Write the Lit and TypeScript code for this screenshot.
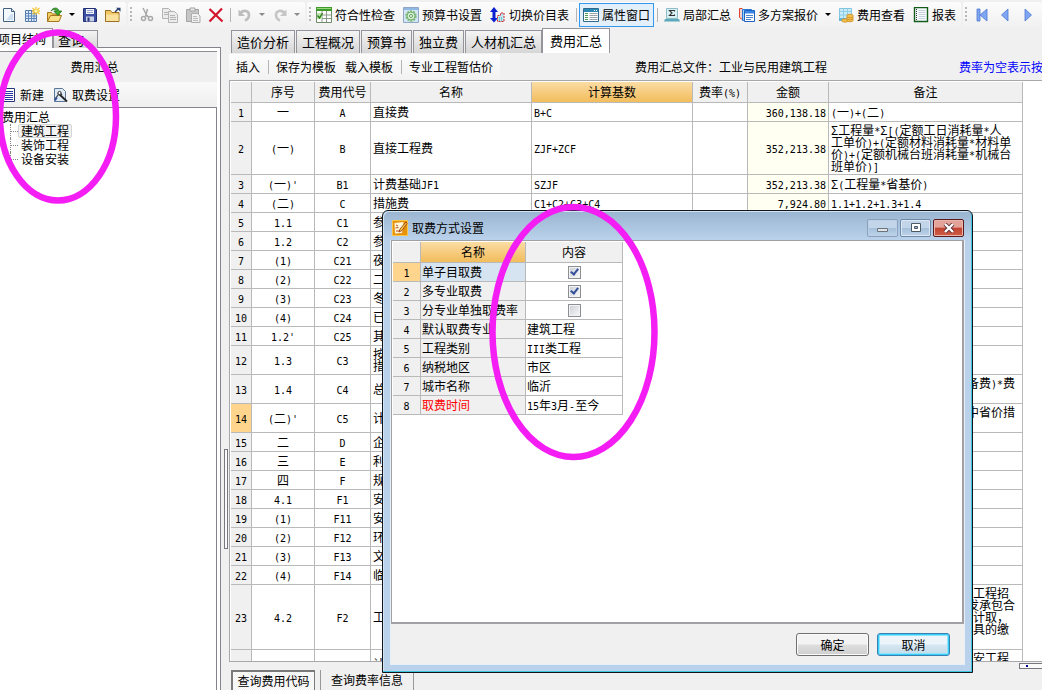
import { LitElement, html, css, svg, nothing, TemplateResult } from "lit";
import { customElement, property, state } from "lit/decorators.js";
import { classMap } from "lit/directives/class-map.js";

const base = css`
  :host {
    font-family: "Noto Sans CJK SC", sans-serif;
    font-size: 12px;
    line-height: 12px;
    color: #000;
  }
  *, *::before, *::after { box-sizing: border-box; }
  button {
    font: inherit;
    color: inherit;
    border: 0;
    background: none;
    padding: 0;
    margin: 0;
    white-space: nowrap;
  }
  .mono { font-family: "DejaVu Sans Mono", monospace; font-size: 10px; line-height: 0; white-space: pre; }
  table { border-collapse: separate; border-spacing: 0; table-layout: fixed; }
  th, td {
    padding: 0 2px;
    font-weight: normal;
    border-right: 1px solid #b9b9b9;
    border-bottom: 1px solid #b9b9b9;
    overflow: hidden;
    white-space: nowrap;
    height: 19px;
  }
  th { background: #f0f0f0; text-align: center; }
  thead th { height: 21px; }
  th.hot { background: linear-gradient(#fbdca4, #f2bd5c); }
  th.cur { background: #ffd58d; }
  td { background: #fff; text-align: left; }
`;

/** Sets Latin runs in the half-width face so that two of them fill one ideograph. */
const mix = (s: string) =>
  s.split(/([\x20-\x7e\u00a0]+)/).filter(Boolean).map((p) =>
    /^[\x20-\x7e\u00a0]+$/.test(p) ? html`<span class="mono">${p}</span>` : p);

const lines = (s: string) => s.split("\n").map((l, i) => html`${i ? html`<br />` : nothing}${mix(l)}`);

const icon = (body: TemplateResult) =>
  html`<svg width="16" height="16" viewBox="0 0 16 16" aria-hidden="true">${body}</svg>`;

const icons: Record<string, TemplateResult> = {
  new: svg`<path d="M2.500 1.500h8l3 3v10h-11z" fill="#f3f8fd" stroke="#43617f"/><path d="M10.500 1.500v3h3" fill="#cfe0f0" stroke="#43617f"/><path d="M10 7h2v6h-7z" fill="#cddff0"/>`,
  sheet: svg`<path d="M1.500 3.500h11v11h-11z" fill="#dbe9f7" stroke="#5579a8"/><path d="M1.500 6.500h11M1.500 9h11M1.500 11.500h11M4.500 3.500v11M7.500 3.500v11M10 3.500v11" stroke="#5f86ba"/><path d="M12 0v8M8.500 1l7 6M15.500 1l-7 6M8 4h8" stroke="#f5c83c" stroke-width="1.300"/><circle cx="12" cy="4" r="1.600" fill="#fff6b0"/>`,
  open: svg`<path d="M.5 14.500v-9h4l1 1.500h7v2" fill="#f4cd62" stroke="#a8761c"/><path d="M.5 14.500l3-6h11l-2.500 6z" fill="#fbe08a" stroke="#a8761c"/><path d="M4 4c2-4 7-4 8 0h2.800l-4 4.500-4-4.500h2.500c-1-2-3-2-5.300 0z" fill="#3da62f" stroke="#1d6a18" stroke-width=".7"/>`,
  save: svg`<path d="M1.500 1.500h12l1 1v12h-13z" fill="#3d4fa3" stroke="#232f74"/><path d="M4 2h8v5h-8z" fill="#f1f4fb"/><path d="M5 3.500h6M5 5.500h6" stroke="#9aa7cf"/><path d="M4 9.500h8v5h-8z" fill="#c8d0e6"/><path d="M5.500 10.500h2v4h-2z" fill="#27337b"/>`,
  folder: svg`<path d="M.5 14.500v-11h5l1.500 2h7v9z" fill="#f2c765" stroke="#9a7023"/><path d="M1 7.500h12.500v6.500h-12.500z" fill="#fae29c"/><path d="M10 5l3.500-3.500" stroke="#27406e" stroke-width="1.400"/><path d="M11 .8h4.500v4z" fill="#27406e"/>`,
  cut: svg`<g fill="none" stroke="#a9a9a9" stroke-width="1.500"><path d="M4 1l4.500 9M8.500 2l-2 7.500"/><circle cx="4.500" cy="11.500" r="2"/><circle cx="11.500" cy="11.500" r="2"/><path d="M7 8l3 2"/></g>`,
  copy: svg`<g fill="#ececec" stroke="#b3b3b3"><path d="M.5 1.500h6l3 3v7h-9z"/><path d="M6.500 4.500h6l3 3v8h-9z"/><path d="M8 8.500h5M8 10.500h6M8 12.500h6M2 5.500h4M2 7.500h4"/></g>`,
  paste: svg`<path d="M1.500 2.500h12v12h-12z" fill="#c6c6c6" stroke="#a3a3a3"/><path d="M5 1h5v3h-5z" fill="#e9e9e9" stroke="#a3a3a3"/><path d="M6.500 6.500h6l2.500 2.500v6.500h-8.500z" fill="#f1f1f1" stroke="#adadad"/><path d="M8 9.500h4M8 11.500h5M8 13.500h5" stroke="#bbb"/>`,
  del: svg`<path d="M1.500 2l13 12.500M14 1.500l-12.500 13" stroke="#d3142c" stroke-width="2.200" fill="none"/>`,
  undo: svg`<path d="M3 6c4-3.500 9-2.500 9 2 0 2.500-1.500 4.500-4 5.500" fill="none" stroke="#bdbdbd" stroke-width="2.600"/><path d="M1.500 2.500v6.500h6.500z" fill="#bdbdbd"/>`,
  redo: svg`<path d="M13 6c-4-3.500-9-2.500-9 2 0 2.500 1.500 4.500 4 5.500" fill="none" stroke="#c6c6c6" stroke-width="2.600"/><path d="M14.500 2.500v6.500h-6.500z" fill="#c6c6c6"/>`,
  check: svg`<path d="M.5.500h15v15h-15z" fill="#fff" stroke="#6f8d6b"/><path d="M0 0h16v4h-16z" fill="#3f9a2c"/><path d="M1 1h14v1h-14z" fill="#9ad77f"/><path d="M1 8h14M1 11.500h14M6 4v11M10.500 4v11" stroke="#8c9c8c"/><path d="M1 6h5v6h-5z" fill="#bfe5ad"/><path d="M1.500 8.500l2 2.500 3-5" fill="none" stroke="#2c7f1c" stroke-width="1.400"/>`,
  gear: svg`<path d="M.5.500h15v15h-15z" fill="#d4e5f7" stroke="#8da7c4"/><path d="M1 1h14v2h-14z" fill="#8fb8e4"/><circle cx="8" cy="9" r="4.800" fill="#d6efd2" stroke="#7fba7b" stroke-width="1.800" stroke-dasharray="2 1"/><circle cx="8" cy="9" r="4" fill="#d6efd2" stroke="#6fae6c"/><circle cx="8" cy="9" r="1.500" fill="#fff" stroke="#5e9e5c"/>`,
  swap: svg`<path d="M4 0l4 5h-2.500v6h2.500l-4 4.500-4-4.500h2.500v-6h-2.500z" fill="#0a1fd0"/><path d="M7.500 14.500v-6h3v-2.500h3.500v8.500z" fill="#bdeaf0" stroke="#d8232e" stroke-dasharray="2 1"/><path d="M9 11h4M9 13h4" stroke="#2aa5b5" stroke-dasharray="1 1"/>`,
  props: svg`<path d="M.5 1.500h15v13h-15z" fill="#fff" stroke="#2f6a8d"/><path d="M1 2h14v3h-14z" fill="#2b87b3"/><path d="M11 3.500h1M13 3.500h1" stroke="#fff"/><path d="M2 6.500h3M2 8.500h3M2 10.500h3M2 12.500h3" stroke="#4d9a55"/><path d="M6.500 6.500h8M6.500 8.500h8M6.500 10.500h8M6.500 12.500h8" stroke="#9aa3a9"/>`,
  sigma: svg`<path d="M2.500 1.500h11v10h-11z" fill="#d8f1f5" stroke="#8fbcc6"/><path d="M1 12h14l1 2.500h-16z" fill="#5aaabb"/><path d="M10.500 4.500v-1h-5l2.500 2.500-2.500 2.500h5v-1" fill="none" stroke="#333" stroke-width="1.100"/>`,
  multi: svg`<path d="M3.500 1.500h-3v9l3 2" fill="#f8d3cd" stroke="#d8452f"/><path d="M3.500 2.500h9v11h-9z" fill="#9fd0f7" stroke="#2a77d1"/><path d="M5.500 3.500h10v11h-10z" fill="#fff" stroke="#2062c4"/><path d="M6 4h9v2.500h-9z" fill="#3a86e6"/><path d="M7 8.500h7M7 10.500h7M7 12.500h5" stroke="#4d84cf"/>`,
  cost: svg`<path d="M1.500 1.500h12v10h-12z" fill="#c9ebf8" stroke="#7fc4e0"/><path d="M1.500 4.500h12M1.500 8h12M5.500 1.500v10M9.500 1.500v10" stroke="#8fcfe6"/><path d="M1 11h7v3h-7z" fill="#65b5d5"/><g fill="#f7c04b" stroke="#c98d24" stroke-width=".8"><ellipse cx="7" cy="13.500" rx="3.300" ry="1.700"/><ellipse cx="12" cy="13" rx="3.300" ry="1.800"/><ellipse cx="12" cy="11" rx="3.300" ry="1.800"/><ellipse cx="12" cy="9" rx="3.300" ry="1.800"/></g>`,
  report: svg`<path d="M1.500.500h13v14h-13z" fill="#f7fbff" stroke="#145c1a" stroke-width="1.400"/><path d="M3.500 2v12" stroke="#333" stroke-dasharray="1 1"/><path d="M5.500 3.500h7M5.500 5.500h7M5.500 7.500h7M5.500 9.500h7M5.500 11.500h7" stroke="#c6d0de"/>`,
  first: svg`<path d="M3 2h3v12h-3zM13 2v12l-7-6z" fill="#7fa6f2" stroke="#4c78d0" stroke-width=".8"/>`,
  prev: svg`<path d="M11 2v12l-6.500-6z" fill="#7fa6f2" stroke="#4c78d0" stroke-width=".8"/>`,
  next: svg`<path d="M5 2v12l6.500-6z" fill="#7fa6f2" stroke="#4c78d0" stroke-width=".8"/>`,
  list: svg`<path d="M1.500 1.500h12v13h-12z" fill="#fff" stroke="#27367a"/><path d="M4 4.500h8M4 6.500h8M4 8.500h8M4 10.500h8M4 12.500h8" stroke="#2537a0"/>`,
  tool: svg`<path d="M1.500 1.500h8l3 3v10h-11z" fill="#dfeaf5" stroke="#5b7796"/><path d="M5 6l9 8.500" stroke="#222" stroke-width="1.800"/><path d="M2 12l5-6.500 2 2.500" fill="none" stroke="#333" stroke-width="1.200"/><circle cx="6.500" cy="6" r="1.600" fill="#fff" stroke="#333"/><path d="M2 13.500l2-3" stroke="#2d4ea3" stroke-width="1.500"/>`,
  app: svg`<path d="M.5.500h15v15h-15z" fill="#e8920c" stroke="#f8c545"/><path d="M2.500 3l9-1-1.500 11-7 .5z" fill="#fff7dc"/><path d="M4 5l2 1M3.500 8l3-.5M4 11h3" stroke="#b5501a"/><path d="M14 2l-6 7-1 3 3-1.500 5-7z" fill="#f6c748" stroke="#8b2f0b" stroke-width=".8"/>`,
};

@customElement("tool-button")
class ToolButton extends LitElement {
  @property() icon = "";
  @property() label = "";
  @property() hint = "";
  @property({ type: Boolean }) pressed = false;
  static styles = [base, css`
    :host { display: block; flex: none; }
    button { display: flex; align-items: center; justify-content: center; gap: 3px; height: 24px; min-width: 23px; }
    svg { display: block; flex: none; }
    .text { padding: 0 4px; }
    .on { background: #e3f0fb; box-shadow: inset 0 0 0 1px #3399ee; }
  `];
  render() {
    return html`<button class=${classMap({ text: !!this.label, on: this.pressed })} aria-label=${this.label || this.hint}>
      ${icon(icons[this.icon])}${this.label ? html`<span>${this.label}</span>` : nothing}
    </button>`;
  }
}

type Row = { h?: string; no: string; seq: string; code: string; name: string; base?: string; sum?: string; note?: string; clip?: boolean };
const rows: Row[] = [
  { no: "1", seq: "一", code: "A", name: "直接费", base: "B+C", sum: "360,138.18", note: "(一)+(二)" },
  { no: "2", h: "h53", seq: "(一)", code: "B", name: "直接工程费", base: "ZJF+ZCF", sum: "352,213.38", note: "Σ工程量*Σ[(定额工日消耗量*人\n工单价)+(定额材料消耗量*材料单\n价)+(定额机械台班消耗量*机械台\n班单价)]" },
  { no: "3", seq: "(一)'", code: "B1", name: "计费基础JF1", base: "SZJF", sum: "352,213.38", note: "Σ(工程量*省基价)" },
  { no: "4", seq: "(二)", code: "C", name: "措施费", base: "C1+C2+C3+C4", sum: "7,924.80", note: "1.1+1.2+1.3+1.4" },
  { no: "5", seq: "1.1", code: "C1", name: "参" },
  { no: "6", seq: "1.2", code: "C2", name: "参" },
  { no: "7", seq: "(1)", code: "C21", name: "夜" },
  { no: "8", seq: "(2)", code: "C22", name: "二" },
  { no: "9", seq: "(3)", code: "C23", name: "冬" },
  { no: "10", seq: "(4)", code: "C24", name: "已" },
  { no: "11", seq: "1.2'", code: "C25", name: "其" },
  { no: "12", h: "h29", seq: "1.3", code: "C3", name: "按\n措" },
  { no: "13", h: "h29", seq: "1.4", code: "C4", name: "总", note: "备费)*费", clip: true },
  { no: "14", h: "h29", seq: "(二)'", code: "C5", name: "计", note: "中省价措", clip: true },
  { no: "15", seq: "二", code: "D", name: "企" },
  { no: "16", seq: "三", code: "E", name: "利" },
  { no: "17", seq: "四", code: "F", name: "规" },
  { no: "18", seq: "4.1", code: "F1", name: "安" },
  { no: "19", seq: "(1)", code: "F11", name: "安" },
  { no: "20", seq: "(2)", code: "F12", name: "环" },
  { no: "21", seq: "(3)", code: "F13", name: "文" },
  { no: "22", seq: "(4)", code: "F14", name: "临" },
  { no: "23", h: "h65", seq: "4.2", code: "F2", name: "工", note: "\u00a0工程招\n发承包合\n\u00a0计取，\n\u00a0具的缴", clip: true },
  { no: "", h: "h29", seq: "", code: "", name: "计", note: "\u00a0安工程", clip: true },
];

@customElement("fee-table")
class FeeTable extends LitElement {
  static styles = [base, css`
    :host { display: block; background: #fff; border: 1px solid #a7a7ac; border-width: 1px 0 1px 1px; padding: 1px 0 0 1px; overflow: hidden; min-height: 0; }
    table { width: 792px; }
    .w-no { width: 21px; } .w-seq { width: 63px; } .w-code { width: 56px; } .w-name { width: 161px; }
    .w-rate { width: 55px; } .w-sum { width: 81px; } .w-note { width: 194px; }
    tbody th { padding: 0; }
    .c { text-align: center; }
    .sum { text-align: right; background: #fffff2; }
    .h53 > * { height: 53px; }
    .h29 > * { height: 29px; }
    .h65 > * { height: 65px; }
    .clip { vertical-align: top; padding: 2px 0 0 138px; }
  `];
  render() {
    return html`<table>
      <colgroup><col class="w-no" /><col class="w-seq" /><col class="w-code" /><col class="w-name" /><col class="w-name" /><col class="w-rate" /><col class="w-sum" /><col class="w-note" /></colgroup>
      <thead><tr><th></th><th>序号</th><th>费用代号</th><th>名称</th><th class="hot">计算基数</th><th>费率${mix("(%)")}</th><th>金额</th><th>备注</th></tr></thead>
      <tbody>${rows.map((r) => html`<tr class=${r.h ?? ""}>
        <th scope="row" class=${r.no === "14" ? "cur" : ""}>${mix(r.no)}</th>
        <td class="c">${mix(r.seq)}</td><td class="c">${mix(r.code)}</td>
        <td>${lines(r.name)}</td><td>${mix(r.base ?? "")}</td><td></td>
        <td class="sum">${mix(r.sum ?? "")}</td>
        <td class=${r.clip ? "clip" : ""}>${lines(r.note ?? "")}</td>
      </tr>`)}</tbody>
    </table>`;
  }
}

@customElement("fee-dialog")
class FeeDialog extends LitElement {
  @state() private flags = [true, true, false];
  private names = ["单子目取费", "多专业取费", "分专业单独取费率", "默认取费专业", "工程类别", "纳税地区", "城市名称", "取费时间"];
  private values = ["", "", "", "建筑工程", "III类工程", "市区", "临沂", "15年3月-至今"];
  static styles = [base, css`
    :host {
      display: flex; flex-direction: column;
      border: 1px solid #10151b; border-radius: 6px 6px 0 0;
      background: linear-gradient(#9ab5d1, #b9d1ea 28px);
      box-shadow: inset -1px -1px #3fc6e0, inset 1px 1px #d5e4f3;
      padding: 0 7px 7px 7px;
    }
    header { display: flex; align-items: center; gap: 4px; height: 29px; padding: 4px 0 0 2px; }
    header svg { display: block; }
    h2 { flex: 1; margin: 0; font: inherit; }
    .ctl { display: flex; gap: 2px; padding-right: 1px; }
    .ctl button { width: 31px; height: 18px; border: 1px solid #6f89a8; border-radius: 2px; background: linear-gradient(#c3d5e8 48%, #a5bfda 50%, #bdd3ea); box-shadow: inset 0 0 0 1px #dce8f4; display: grid; place-items: center; }
    .ctl .min { border-color: #8aa2bf; box-shadow: inset 0 0 0 1px #bdd0e5; }
    .ctl .close { border-color: #5a1a1c; background: linear-gradient(#e4a399 45%, #c14430 50%, #cf5d45); box-shadow: inset 0 0 0 1px #e9b5ac; }
    .body { flex: 1; display: flex; flex-direction: column; background: #f0f0f0; border: 1px solid #e8eff7; border-top: 0; }
    .grid { flex: 1; background: #fff; border: 1px solid #a0a0a5; border-width: 1px 2px 2px 1px; padding: 1px 0 0 1px; }
    table { width: 230px; }
    th, td { padding: 0 1px; }
    .w1 { width: 28px; } .w2 { width: 105px; } .w3 { width: 97px; }
    th.name { text-align: left; }
    th.sel { background: #d6e4f2; }
    .red { color: #f00; }
    td.c { text-align: center; }
    input { appearance: none; display: block; width: 13px; height: 13px; margin: 0 auto; border: 1px solid #8b8e93; background: linear-gradient(135deg, #c9cdd3, #fafafa); box-shadow: inset 0 0 0 1px #f3f3f3; }
    input:checked::after { content: ""; display: block; width: 5px; height: 8px; margin: 0 0 0 3px; border: solid #34509c; border-width: 0 2px 2px 0; transform: rotate(38deg); }
    footer { display: flex; justify-content: flex-end; gap: 8px; padding: 9px 14px 8px; }
    footer button { width: 73px; height: 23px; border: 1px solid #707070; border-radius: 3px; background: linear-gradient(#f3f3f3 48%, #dedede 52%, #cfcfcf); box-shadow: inset 0 0 0 1px #fbfbfb; }
    footer .def { border-color: #3c7fb1; background: linear-gradient(#eef5fa 48%, #d4e6f1 52%, #c4dbe9); box-shadow: inset 0 0 0 1px #34cdf7, inset 0 0 0 2px #8fe3fb; }
  `];
  render() {
    return html`
      <header>${icon(icons.app)}<h2>取费方式设置</h2>
        <div class="ctl">
          <button class="min" aria-label="最小化"><svg width="12" height="10"><path d="M.5 5.500h10v3h-10z" fill="#e4e4e4" stroke="#6a7480"/></svg></button>
          <button aria-label="最大化"><svg width="12" height="10"><path d="M1.500.500h9v8h-9z" fill="#fff" stroke="#4d5965"/><path d="M4.500 3.500h3v2h-3z" fill="#9fb6d0" stroke="#4d5965"/></svg></button>
          <button class="close" aria-label="关闭"><svg width="12" height="10"><path d="M2 1l8 8M10 1l-8 8" stroke="#5a3038" stroke-width="4"/><path d="M2 1l8 8M10 1l-8 8" stroke="#fff" stroke-width="2.400"/></svg></button>
        </div>
      </header>
      <div class="body">
        <div class="grid"><table>
          <colgroup><col class="w1" /><col class="w2" /><col class="w3" /></colgroup>
          <thead><tr><th></th><th class="hot">名称</th><th>内容</th></tr></thead>
          <tbody>${this.names.map((n, i) => html`<tr>
            <th class=${i ? "" : "cur"}>${mix(String(i + 1))}</th>
            <th scope="row" id="n${i}" class=${classMap({ name: true, sel: i === 0, red: i === 7 })}>${n}</th>
            ${i < 3
              ? html`<td class="c"><input type="checkbox" aria-labelledby="n${i}" .checked=${this.flags[i]} /></td>`
              : html`<td>${mix(this.values[i])}</td>`}
          </tr>`)}</tbody>
        </table></div>
        <footer><button>确定</button><button class="def">取消</button></footer>
      </div>`;
  }
}

@customElement("app-root")
class AppRoot extends LitElement {
  static styles = [base, css`
    :host { display: flex; flex-direction: column; position: relative; height: 100vh; overflow: hidden; background: #f0f0f0; }
    .bars { display: flex; gap: 2px; height: 28px; flex: none; overflow: hidden; padding-top: 2px; }
    .bar { display: flex; align-items: center; flex: none; height: 25px; padding-right: 2px; border-radius: 3px; background: linear-gradient(#fcfcfc, #f1f1f1); }
    .bar.views { padding-right: 1px; }
    .bar.rest { flex: 1; }
    .bar.file { margin-left: -3px; }
    .grip { width: 7px; height: 16px; background: linear-gradient(#b8b8b8, #b8b8b8) 2px 0 / 2px 100% no-repeat; mask: repeating-linear-gradient(#000 0 2px, transparent 2px 4px); }
    .grip.s { width: 5px; }
    .sep { width: 6px; height: 14px; background: linear-gradient(90deg, transparent 3px, #b4b4b4 3px, #b4b4b4 4px, transparent 4px); }
    .drop { width: 12px; height: 24px; display: grid; place-items: center; }
    .drop::after { content: ""; border: 3px solid transparent; border-top-color: #000; border-bottom: 0; }
    .drop.off::after { border-top-color: #8a8a8a; }
    main { flex: 1; min-height: 0; display: flex; }
    aside { width: 221px; flex: none; display: flex; flex-direction: column; }
    .ltabs { display: flex; height: 20px; align-items: flex-end; }
    .ltabs button { height: 18px; border: 1px solid #94949a; border-bottom: 0; background: linear-gradient(#f3f3f3, #d7d7d7); width: 45px; text-align: left; padding-left: 4px; font-size: 13px; }
    .ltabs .act { width: 53px; height: 20px; background: #f8f8f8; padding: 0; border-left: 0; font-size: 12px; text-indent: -2px; }
    .ltabs i { flex: 1; border-bottom: 1px solid #84848c; height: 1px; }
    .side { flex: 1; border-right: 1px solid #84848c; background: #fff; padding: 3px 3px 0 0; display: flex; flex-direction: column; }
    .title { border-top: 1px solid #8c8c92; background: #efefef; height: 31px; padding: 0 28px 0 0; display: grid; place-items: center; margin: 0; font: inherit; }
    .stools { display: flex; height: 25px; gap: 1px; align-items: center; background: linear-gradient(#fafafa, #efefef); }
    .stools tool-button:first-child { margin-left: -3px; }
    .tree { flex: 1; border: 1px solid #84848c; border-width: 1px 1px 0 0; padding: 2px 0 0 2px; margin: 0; list-style: none; line-height: 14px; }
    .tree ul { list-style: none; margin: 0 0 0 8px; padding: 0; }
    .tree ul li { display: flex; align-items: center; height: 14px; border-left: 1px dotted #888; }
    .tree ul li::before { content: ""; width: 7px; border-top: 1px dotted #888; }
    .tree ul li span { padding: 0 2px; border: 1px solid transparent; line-height: 12px; }
    .tree ul li.sel span { border-color: #d5d5d5; border-radius: 2px; background: #f2f2f2; }
    .split { width: 8px; flex: none; display: flex; align-items: center; padding-left: 3px; }
    .split i { width: 4px; height: 100px; border: 1px solid #77777f; background: #fafafa; margin-top: 280px; }
    .work { flex: 1; min-width: 0; display: flex; flex-direction: column; }
    .tabs { display: flex; align-items: flex-end; gap: 1px; height: 25px; padding-left: 2px; flex: none; }
    .tabs button { height: 23px; padding: 0 5px; border: 1px solid #94949a; border-bottom: 0; background: linear-gradient(#f4f4f4, #d6d6d6); font-size: 13px; }
    .tabs .act { height: 25px; padding: 0 7px; background: #fff; margin-left: -1px; }
    .tools { display: flex; align-items: center; height: 27px; flex: none; overflow: hidden; white-space: nowrap; }
    .acts { display: flex; align-items: center; height: 25px; background: linear-gradient(#fcfcfc, #f2f2f2); padding: 0 6px 0 7px; width: 271px; flex: none; }
    .acts .sep { margin: 0 5px; }
    .acts button + button { margin-left: 9px; }
    .file-name { margin-left: 135px; }
    .hint { margin-left: 132px; color: #00f; }
    fee-table { flex: 1; }
    .hs { display: flex; justify-content: flex-end; height: 8px; flex: none; padding-top: 1px; }
    .hs i { width: 23px; height: 6px; border: 1px solid #77777f; background: radial-gradient(circle at 7px 2px, #00008b 1px, #fafafa 1px); border-right: 0; }
    .btabs { display: flex; height: 20px; flex: none; padding-left: 2px; gap: 5px; }
    .btabs button { padding: 0 10px; border-right: 1px solid #98989c; }
    .btabs .act { width: 84px; padding: 0; border: 2px solid #7a7a7a; border-width: 2px 1px 0 2px; background: repeating-conic-gradient(#fff 0 25%, #f0f0f0 0 50%) 0 0 / 2px 2px; }
    .btabs i { width: 1px; background: #98989c; margin-right: -5px; }
    fee-dialog { position: absolute; left: 382px; top: 210px; width: 591px; height: 463px; }
    .marks { position: absolute; left: 0; top: 0; pointer-events: none; }
  `];
  private b(i: string, hint: string) {
    return html`<tool-button icon=${i} hint=${hint}></tool-button>`;
  }
  private t(i: string, label: string, pressed = false) {
    return html`<tool-button icon=${i} label=${label} ?pressed=${pressed}></tool-button>`;
  }
  render() {
    return html`
      <nav class="bars">
        <div class="bar file">${this.b("new", "新建")}${this.b("sheet", "新建表")}${this.b("open", "打开")}<button class="drop" aria-label="更多"></button>${this.b("save", "保存")}${this.b("folder", "目录")}</div>
        <div class="bar"><i class="grip"></i>${this.b("cut", "剪切")}${this.b("copy", "复制")}${this.b("paste", "粘贴")}${this.b("del", "删除")}<i class="sep"></i>${this.b("undo", "撤销")}<button class="drop off" aria-label="撤销列表"></button>${this.b("redo", "重做")}<button class="drop off" aria-label="重做列表"></button></div>
        <div class="bar views"><i class="grip s"></i>${this.t("check", "符合性检查")}${this.t("gear", "预算书设置")}${this.t("swap", "切换价目表")}<i class="sep"></i>${this.t("props", "属性窗口", true)}<i class="sep"></i>${this.t("sigma", "局部汇总")}${this.t("multi", "多方案报价")}<button class="drop" aria-label="报价列表"></button>${this.t("cost", "费用查看")}${this.t("report", "报表")}</div>
        <div class="bar rest"><i class="grip"></i>${this.b("first", "第一")}${this.b("prev", "上一")}${this.b("next", "下一")}</div>
      </nav>
      <main>
        <aside>
          <div class="ltabs"><button class="act">项目结构</button><button>查询</button><i></i></div>
          <div class="side">
            <h1 class="title">费用汇总</h1>
            <div class="stools">${this.t("list", "新建")}${this.t("tool", "取费设置")}</div>
            <ul class="tree"><li>费用汇总<ul><li class="sel"><span>建筑工程</span></li><li><span>装饰工程</span></li><li><span>设备安装</span></li></ul></li></ul>
          </div>
        </aside>
        <div class="split"><i></i></div>
        <section class="work">
          <div class="tabs">${["造价分析", "工程概况", "预算书", "独立费", "人材机汇总"].map((t) => html`<button>${t}</button>`)}<button class="act">费用汇总</button></div>
          <div class="tools">
            <div class="acts"><button>插入</button><i class="sep"></i><button>保存为模板</button><button>载入模板</button><i class="sep"></i><button>专业工程暂估价</button></div>
            <span class="file-name">费用汇总文件：工业与民用建筑工程</span>
            <span class="hint">费率为空表示按</span>
          </div>
          <fee-table></fee-table>
          <div class="hs"><i></i></div>
          <div class="btabs"><button class="act">查询费用代码</button><i></i><button>查询费率信息</button></div>
        </section>
      </main>
      <fee-dialog role="dialog" aria-label="取费方式设置"></fee-dialog>
      <svg class="marks" width="700" height="480" aria-hidden="true"><g fill="none" stroke="#f41ef4" stroke-width="6.500"><ellipse cx="58" cy="116.500" rx="58" ry="84"/><ellipse cx="573.500" cy="332" rx="81" ry="125"/></g></svg>`;
  }
}
